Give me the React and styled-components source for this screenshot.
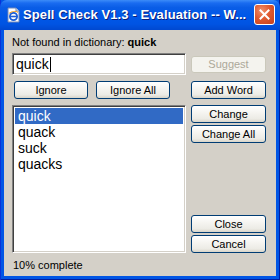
import styled, { createGlobalStyle } from "styled-components"

const GlobalStyle = createGlobalStyle`
    html, body {
        margin: 0;
        padding: 0;
        width: 280px;
        height: 280px;
        overflow: hidden;
        background: #ffffff;
    }
    * { box-sizing: border-box; }
`

const Window = styled.div`
    width: 280px;
    height: 280px;
    display: flex;
    flex-direction: column;
    background: #0055e5;
    box-shadow: inset 1px 0 0 #0831d9, inset -1px 0 0 #001ea0, inset 0 -1px 0 #001ea0;
    font-family: "Liberation Sans", Arial, sans-serif;
`

const TitleBar = styled.div`
    height: 30px;
    flex: none;
    display: flex;
    align-items: center;
    padding: 0 5px 1px 6px;
    border-radius: 7px 7px 0 0;
    background: linear-gradient(to bottom,
        #3c8cf8 0%, #1a6cf0 10%, #0a5de6 25%, #0058e8 50%, #0054e3 80%, #0048d0 100%);
`

const Title = styled.div`
    flex: 1;
    margin-left: 1px;
    color: #ffffff;
    font-weight: bold;
    font-size: 13px;
    letter-spacing: 0.1px;
    white-space: nowrap;
    overflow: hidden;
    text-shadow: 1px 1px 0 #0a1d7a;
`

const CloseButton = styled.div`
    width: 21px;
    height: 21px;
    flex: none;
    display: flex;
    align-items: center;
    justify-content: center;
    border: 1px solid #ffffff;
    border-radius: 3px;
    background: radial-gradient(circle at 35% 30%, #f0906c 0%, #e05a30 45%, #c4401c 100%);
`

const Client = styled.div`
    flex: 1;
    display: flex;
    flex-direction: column;
    margin: 0 4px 4px 4px;
    padding: 6px 0 0 8px;
    background: #d4d0c8;
    font-size: 11px;
    color: #000000;
`

const Label = styled.div`
    height: 13px;
    line-height: 13px;
    white-space: nowrap;

    b { font-weight: bold; }
`

const Grid = styled.div`
    margin-top: 4px;
    display: grid;
    grid-template-columns: 174px 75px;
    grid-template-rows: 22px 18px 148px;
    column-gap: 5px;
    row-gap: 6px;
`

const Sunken = styled.div`
    background: #ffffff;
    border-style: solid;
    border-width: 1px;
    border-color: #808080 #ffffff #ffffff #808080;
    box-shadow: inset 1px 1px 0 #404040, inset -1px -1px 0 #d4d0c8;
`

const TextBox = styled(Sunken)`
    display: flex;
    align-items: center;
    padding-left: 3px;
    font-size: 14px;
`

const Caret = styled.span`
    display: inline-block;
    width: 1px;
    height: 15px;
    margin-left: 1px;
    background: #000000;
`

const ListBox = styled(Sunken)`
    padding: 2px 2px;
    font-size: 14px;
`

const ListItem = styled.div`
    height: 16px;
    line-height: 16px;
    padding-left: 3px;
    background: ${props => props.$selected ? "#316ac5" : "transparent"};
    color: ${props => props.$selected ? "#ffffff" : "#000000"};
`

const Button = styled.div`
    height: ${props => props.$disabled ? "17px" : "18px"};
    align-self: ${props => props.$disabled ? "center" : "stretch"};
    display: flex;
    align-items: center;
    justify-content: center;
    border: 1px solid ${props => props.$disabled ? "#cac8bb" : "#003c74"};
    border-radius: 3px;
    background: ${props => props.$disabled
        ? "#f4f3ee"
        : "linear-gradient(to bottom, #ffffff 0%, #f6f5f1 40%, #ecebe5 80%, #d8d4c8 100%)"};
    color: ${props => props.$disabled ? "#aca899" : "#000000"};
    font-size: 11px;
    white-space: nowrap;
`

const ButtonRow = styled.div`
    display: grid;
    grid-template-columns: 74px 74px;
    column-gap: 8px;
    padding-left: 2px;
`

const SideColumn = styled.div`
    display: flex;
    flex-direction: column;
    gap: 2px;

    .push { margin-top: auto; }
`

const Status = styled.div`
    margin-top: 6px;
    height: 13px;
    line-height: 13px;
    padding-left: 1px;
`

function AppIcon() {
    return (
        <svg width="16" height="16" viewBox="0 0 16 16">
            <path d="M2 1h8l3 3v11H2z" fill="#ffffff" stroke="#6f86b8" strokeWidth="1" />
            <path d="M10 1v3h3" fill="#d8e2f4" stroke="#6f86b8" strokeWidth="1" />
            <circle cx="7.5" cy="9.5" r="3.6" fill="none" stroke="#1c5fd6" strokeWidth="1.8" />
            <path d="M4.2 9.5h6.6" stroke="#1c5fd6" strokeWidth="1.6" />
            <path d="M3 6.5c2-2 7-3 9-1" fill="none" stroke="#f0a020" strokeWidth="1" />
        </svg>
    )
}

function CloseIcon() {
    return (
        <svg width="11" height="11" viewBox="0 0 11 11">
            <path d="M1.5 1.5l8 8M9.5 1.5l-8 8" stroke="#ffffff" strokeWidth="2" strokeLinecap="square" />
        </svg>
    )
}

const suggestions = ["quick", "quack", "suck", "quacks"]

export default function App() {
    return (
        <>
            <GlobalStyle />
            <Window>
                <TitleBar>
                    <AppIcon />
                    <Title>Spell Check V1.3 - Evaluation -- W...</Title>
                    <CloseButton><CloseIcon /></CloseButton>
                </TitleBar>
                <Client>
                    <Label>Not found in dictionary: <b>quick</b></Label>
                    <Grid>
                        <TextBox>quick<Caret /></TextBox>
                        <Button $disabled>Suggest</Button>
                        <ButtonRow>
                            <Button>Ignore</Button>
                            <Button>Ignore All</Button>
                        </ButtonRow>
                        <Button>Add Word</Button>
                        <ListBox>
                            {suggestions.map((word, i) => (
                                <ListItem key={word} $selected={i === 0}>{word}</ListItem>
                            ))}
                        </ListBox>
                        <SideColumn>
                            <Button>Change</Button>
                            <Button>Change All</Button>
                            <Button className="push">Close</Button>
                            <Button>Cancel</Button>
                        </SideColumn>
                    </Grid>
                    <Status>10% complete</Status>
                </Client>
            </Window>
        </>
    )
}
